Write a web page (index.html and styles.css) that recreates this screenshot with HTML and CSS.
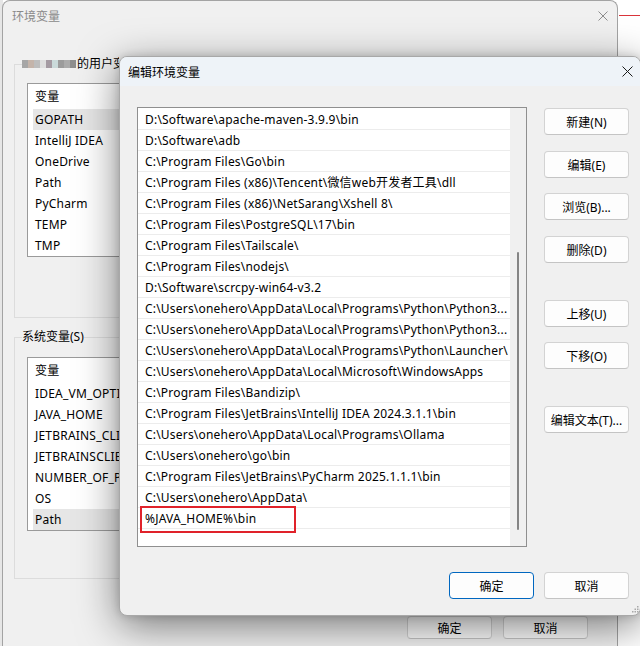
FILE: index.html
```html
<!DOCTYPE html>
<html lang="zh-CN">
<head>
<meta charset="utf-8">
<title>编辑环境变量</title>
<link rel="stylesheet" href="styles.css">
</head>
<body>
<div class="desk-edge"></div>
<div class="backwin">
  <div class="bw-title">
    <span>环境变量</span>
    <svg class="x-icon" width="10" height="10" viewBox="0 0 10 10"><path d="M0.5 0.5 L9.5 9.5 M9.5 0.5 L0.5 9.5" stroke="#8c8c8c" stroke-width="1" fill="none"/></svg>
  </div>
  <div class="bw-body">
    <fieldset class="grp grp-user">
      <legend><span class="mosaic"><i></i><i></i><i></i><i></i><i></i><i></i><i></i><i></i><i></i></span><span class="lg-text">的用户变量(U)</span></legend>
      <div class="vlist">
        <div class="vhead">变量</div>
        <div class="vrow sel">GOPATH</div>
        <div class="vrow">IntelliJ IDEA</div>
        <div class="vrow">OneDrive</div>
        <div class="vrow">Path</div>
        <div class="vrow">PyCharm</div>
        <div class="vrow">TEMP</div>
        <div class="vrow">TMP</div>
      </div>
    </fieldset>
    <fieldset class="grp grp-sys">
      <legend>系统变量(S)</legend>
      <div class="vlist">
        <div class="vhead">变量</div>
        <div class="vrow">IDEA_VM_OPTIONS</div>
        <div class="vrow">JAVA_HOME</div>
        <div class="vrow">JETBRAINS_CLIENT_VM_OPTIONS</div>
        <div class="vrow">JETBRAINSCLIENT_VM_OPTIONS</div>
        <div class="vrow">NUMBER_OF_PROCESSORS</div>
        <div class="vrow">OS</div>
        <div class="vrow sel">Path</div>
      </div>
    </fieldset>
    <div class="bw-actions">
      <button class="btn btn-sm">确定</button>
      <button class="btn btn-sm">取消</button>
    </div>
  </div>
</div>

<div class="frontwin">
  <div class="fw-title">
    <span>编辑环境变量</span>
    <svg class="x-icon" width="11" height="11" viewBox="0 0 11 11"><path d="M0.5 0.5 L10.5 10.5 M10.5 0.5 L0.5 10.5" stroke="#1a1a1a" stroke-width="1" fill="none"/></svg>
  </div>
  <div class="fw-body">
    <div class="plist">
      <div class="prows">
        <div class="prow">D:\Software\apache-maven-3.9.9\bin</div>
        <div class="prow">D:\Software\adb</div>
        <div class="prow">C:\Program Files\Go\bin</div>
        <div class="prow">C:\Program Files (x86)\Tencent\微信web开发者工具\dll</div>
        <div class="prow">C:\Program Files (x86)\NetSarang\Xshell 8\</div>
        <div class="prow">C:\Program Files\PostgreSQL\17\bin</div>
        <div class="prow">C:\Program Files\Tailscale\</div>
        <div class="prow">C:\Program Files\nodejs\</div>
        <div class="prow">D:\Software\scrcpy-win64-v3.2</div>
        <div class="prow">C:\Users\onehero\AppData\Local\Programs\Python\Python3...</div>
        <div class="prow">C:\Users\onehero\AppData\Local\Programs\Python\Python3...</div>
        <div class="prow">C:\Users\onehero\AppData\Local\Programs\Python\Launcher\</div>
        <div class="prow">C:\Users\onehero\AppData\Local\Microsoft\WindowsApps</div>
        <div class="prow">C:\Program Files\Bandizip\</div>
        <div class="prow">C:\Program Files\JetBrains\IntelliJ IDEA 2024.3.1.1\bin</div>
        <div class="prow">C:\Users\onehero\AppData\Local\Programs\Ollama</div>
        <div class="prow">C:\Users\onehero\go\bin</div>
        <div class="prow">C:\Program Files\JetBrains\PyCharm 2025.1.1.1\bin</div>
        <div class="prow">C:\Users\onehero\AppData\</div>
        <div class="prow mark">%JAVA_HOME%\bin<span class="redbox"></span></div>
      </div>
      <div class="pscroll"><div class="thumb"></div></div>
    </div>
    <div class="side-btns">
      <button class="btn b-new">新建(N)</button>
      <button class="btn b-edit">编辑(E)</button>
      <button class="btn b-browse">浏览(B)...</button>
      <button class="btn b-del">删除(D)</button>
      <button class="btn b-up">上移(U)</button>
      <button class="btn b-down">下移(O)</button>
      <button class="btn b-text">编辑文本(T)...</button>
    </div>
    <div class="fw-actions">
      <button class="btn primary">确定</button>
      <button class="btn">取消</button>
    </div>
  </div>
  <svg class="grip" width="7" height="7" viewBox="0 0 7 7"><g fill="#a8a8a8"><rect x="5" y="0" width="1.5" height="1.5"/><rect x="2.5" y="2.5" width="1.5" height="1.5"/><rect x="5" y="2.5" width="1.5" height="1.5"/><rect x="0" y="5" width="1.5" height="1.5"/><rect x="2.5" y="5" width="1.5" height="1.5"/><rect x="5" y="5" width="1.5" height="1.5"/></g></svg>
</div>
</body>
</html>
```

FILE: styles.css
```css
* { box-sizing: border-box; }

body {
  margin: 0;
  width: 640px;
  height: 646px;
  overflow: hidden;
  position: relative;
  background:
    linear-gradient(#d9343a, #d9343a) no-repeat 619px 15px / 21px 1px,
    #ffffff;
  font-family: "Noto Sans", "Noto Sans CJK SC", sans-serif;
  font-size: 12px;
  color: #000;
}

.desk-edge {
  position: absolute;
  left: 0;
  top: 0;
  width: 3px;
  height: 646px;
  background: #e6e6e6;
}

/* ---------- background window ---------- */
.backwin {
  position: absolute;
  left: 2px;
  top: 0;
  width: 616px;
  height: 646px;
  overflow: hidden;
  background: #f0f0f0;
  border: 1px solid #a3a3a3;
  border-bottom: 0;
  border-radius: 8px 8px 0 0;
}

.bw-title {
  height: 30px;
  display: flex;
  align-items: center;
  justify-content: space-between;
  padding: 0 9px 0 9px;
  color: #8a8a8a;
}

.bw-body {
  padding-left: 11px;
}

.grp {
  margin: 0;
  width: 600px;
  min-width: 0;
  border: 1px solid #dcdcdc;
}

.grp legend {
  padding: 0;
  line-height: 16px;
  display: flex;
  align-items: center;
}

.lg-text {
  display: block;
  width: 42px;
  overflow: hidden;
  white-space: nowrap;
}

.grp-user {
  margin-top: 25px;
  padding: 11px 0 60px 7px;
}

.grp-sys {
  margin-top: 11px;
  padding: 12px 0 47px 7px;
}

.mosaic {
  display: inline-flex;
  height: 8px;
  margin-right: 1px;
}
.mosaic i { display: block; width: 6px; height: 8px; }
.mosaic i:nth-child(1) { background: #a6a6a6; }
.mosaic i:nth-child(2) { background: #c4b4aa; }
.mosaic i:nth-child(3) { background: #bdbdbd; }
.mosaic i:nth-child(4) { background: #dedede; }
.mosaic i:nth-child(5) { background: #a49aa2; }
.mosaic i:nth-child(6) { background: #cadada; }
.mosaic i:nth-child(7) { background: #9c9c9c; }
.mosaic i:nth-child(8) { background: #ababab; }
.mosaic i:nth-child(9) { background: #8e8e8e; }

.vlist {
  margin-left: 5px;
  width: 560px;
  height: 174px;
  background: #fff;
  border: 1px solid #9a9a9a;
  padding: 1px 0 0 5px;
  overflow: hidden;
}

.vhead,
.vrow {
  width: 87px;
  overflow: hidden;
  white-space: nowrap;
  padding-left: 2px;
  letter-spacing: 0.2px;
}

.vhead {
  height: 24px;
  line-height: 24px;
}

.vrow {
  height: 21px;
  line-height: 21px;
}

.vrow.sel { background: #e6e6e6; }

.bw-actions {
  display: flex;
  gap: 11px;
  margin: 37px 0 0 393px;
}

/* ---------- buttons ---------- */
.btn {
  font: inherit;
  color: #000;
  width: 85px;
  height: 27px;
  padding: 0;
  background: #fdfdfd;
  border: 1px solid #d3d3d3;
  border-bottom-color: #c4c4c4;
  border-radius: 4px;
}

.btn-sm { height: 23px; }

.btn.primary {
  border: 1px solid #0067c0;
}

/* ---------- front dialog ---------- */
.frontwin {
  position: absolute;
  left: 119px;
  top: 56px;
  width: 522px;
  height: 560px;
  background: #f0f0f0;
  border: 1px solid #a8a8a8;
  border-radius: 8px;
  box-shadow: 0 10px 40px rgba(0, 0, 0, 0.5), 0 0 8px rgba(0, 0, 0, 0.15);
  z-index: 2;
}

.fw-title {
  height: 29px;
  display: flex;
  align-items: center;
  justify-content: space-between;
  padding: 0 7px 0 8px;
  background: #eef3f8;
  border-radius: 7px 7px 0 0;
}

.fw-body {
  display: grid;
  grid-template-columns: 390px 85px;
  column-gap: 17px;
  padding: 21px 0 0 17px;
}

.plist {
  height: 440px;
  background: #fff;
  border: 1px solid #8f8f8f;
  display: flex;
}

.prows {
  flex: 1;
  min-width: 0;
  padding-top: 1px;
}

.prow {
  position: relative;
  height: 21px;
  line-height: 21px;
  padding-left: 7px;
  border-bottom: 1px solid #ececec;
  white-space: nowrap;
  overflow: hidden;
  letter-spacing: 0.2px;
}

.prow.mark { overflow: visible; }

.redbox {
  position: absolute;
  left: 2px;
  top: -2px;
  width: 156px;
  height: 27px;
  border: 2px solid #e0222a;
}

.pscroll {
  width: 16px;
  background: #f0f0f0;
  padding: 144px 0 0 7px;
}

.thumb {
  width: 2px;
  height: 278px;
  background: #858585;
  border-radius: 1px;
}

.side-btns {
  display: flex;
  flex-direction: column;
  padding-top: 1px;
}

.b-edit { margin-top: 16px; }
.b-browse { margin-top: 15px; }
.b-del { margin-top: 16px; }
.b-up { margin-top: 37px; }
.b-down { margin-top: 15px; }
.b-text { margin-top: 37px; }

.fw-actions {
  grid-column: 1 / -1;
  display: flex;
  justify-content: flex-end;
  gap: 10px;
  margin-top: 25px;
}

.grip {
  position: absolute;
  right: 1px;
  bottom: 2px;
}
```
